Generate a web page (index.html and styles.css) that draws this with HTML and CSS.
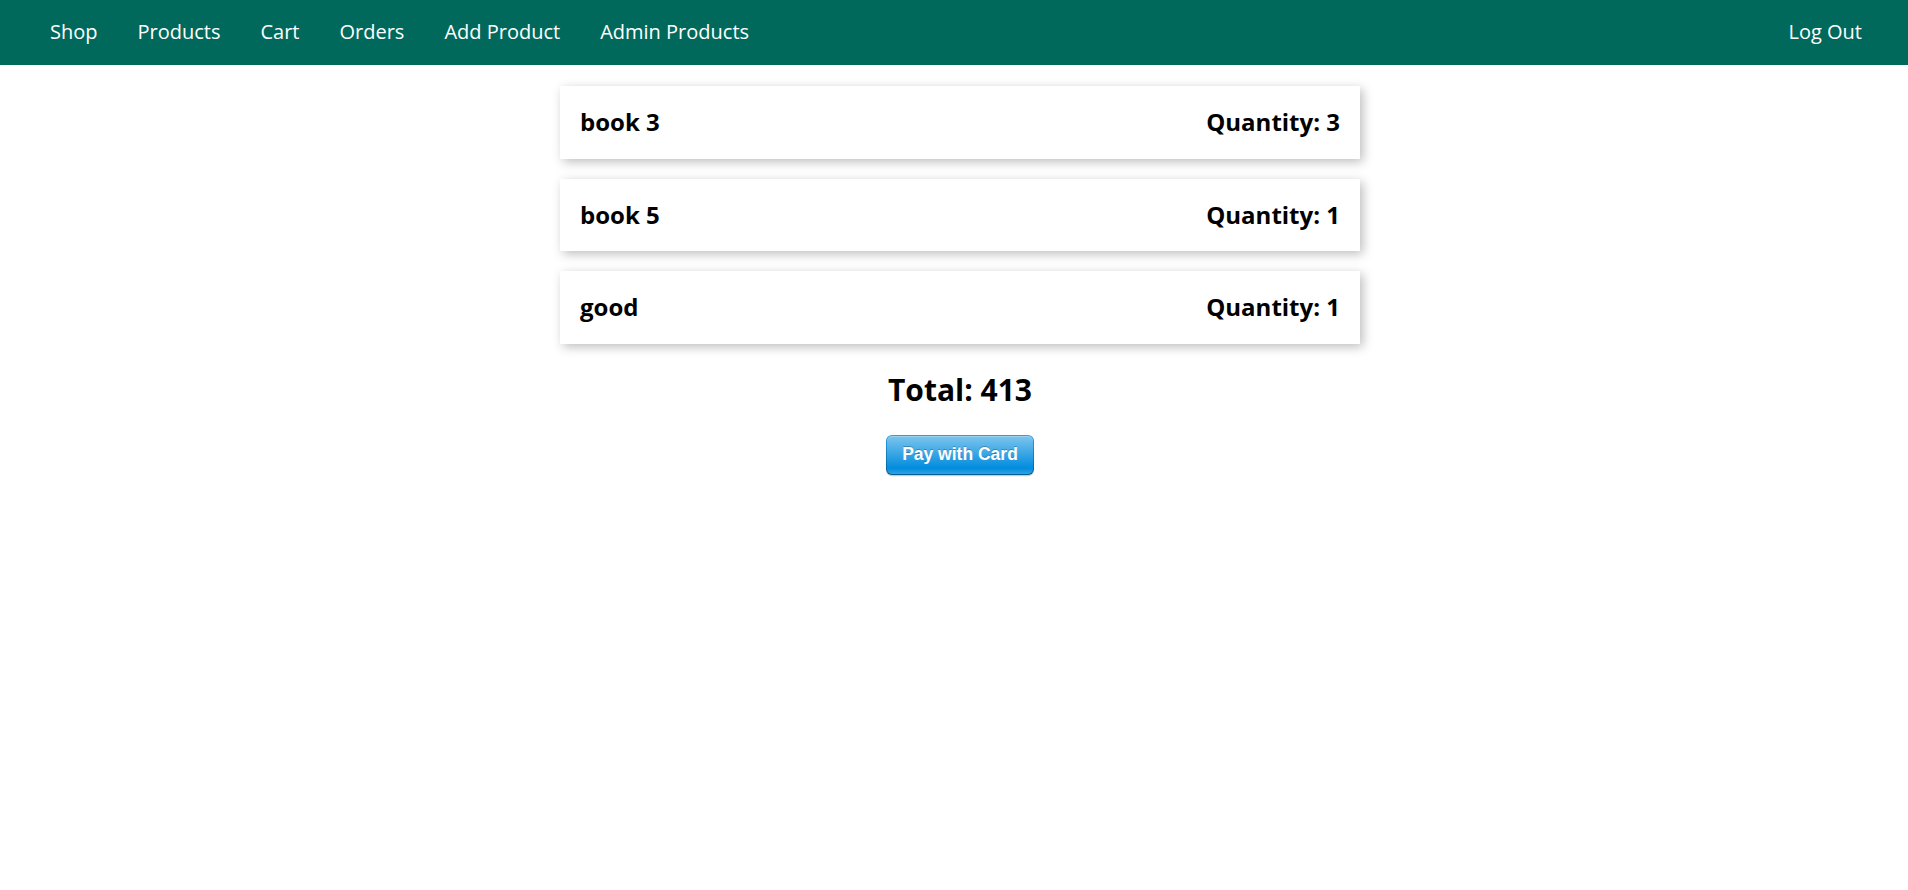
FILE: index.html
```html
<!DOCTYPE html>
<html lang="en">
<head>
<meta charset="utf-8">
<title>Cart</title>
<link rel="stylesheet" href="styles.css">
</head>
<body>
<header class="main-header">
  <nav class="main-header__nav">
    <ul class="main-header__item-list">
      <li class="main-header__item"><a href="#">Shop</a></li>
      <li class="main-header__item"><a href="#">Products</a></li>
      <li class="main-header__item"><a href="#">Cart</a></li>
      <li class="main-header__item"><a href="#">Orders</a></li>
      <li class="main-header__item"><a href="#">Add Product</a></li>
      <li class="main-header__item"><a href="#">Admin Products</a></li>
    </ul>
  </nav>
  <nav class="main-header__nav">
    <ul class="main-header__item-list">
      <li class="main-header__item"><a href="#">Log Out</a></li>
    </ul>
  </nav>
</header>
<main class="main">
  <ul class="cart__item-list">
    <li class="cart__item"><h1>book 3</h1><h2>Quantity: 3</h2></li>
    <li class="cart__item"><h1>book 5</h1><h2>Quantity: 1</h2></li>
    <li class="cart__item"><h1>good</h1><h2>Quantity: 1</h2></li>
  </ul>
  <div class="centered">
    <h2 class="total">Total: 413</h2>
  </div>
  <div class="centered">
    <button class="stripe-button-el" type="button"><span>Pay with Card</span></button>
  </div>
</main>
</body>
</html>
```
FILE: styles.css
```css
html, body {
  margin: 0;
  padding: 0;
}
body {
  font-family: "Open Sans", "Noto Sans", sans-serif;
  color: #000;
  background: #fff;
}
.main-header {
  box-sizing: border-box;
  height: 65px;
  background-color: #00695c;
  padding: 0 26px 3px 30px;
  display: flex;
  align-items: center;
  justify-content: space-between;
}
.main-header__nav {
  height: 100%;
  display: flex;
  align-items: center;
}
.main-header__item-list {
  list-style: none;
  margin: 0;
  padding: 0;
  display: flex;
}
.main-header__item {
  margin: 0 20px;
  padding: 0;
  font-size: 20px;
  line-height: 27px;
}
.main-header__item a {
  text-decoration: none;
  color: #fff;
}
.main {
  padding: 21px 20px 20px 32px;
}
.cart__item-list {
  list-style: none;
  margin: 0 auto;
  padding: 0;
  width: 800px;
}
.cart__item {
  display: flex;
  justify-content: space-between;
  align-items: center;
  padding: 20px;
  box-shadow: 2.5px 2.5px 10px rgba(0, 0, 0, 0.26);
  margin-bottom: 20px;
  background: #fff;
}
.cart__item h1,
.cart__item h2 {
  margin: 0;
  font-size: 24px;
  font-weight: 700;
  line-height: 32.7px;
}
.centered {
  text-align: center;
}
.total {
  font-size: 30px;
  font-weight: 700;
  margin: 25px 0;
  line-height: 41px;
}
.stripe-button-el {
  display: inline-block;
  overflow: hidden;
  background-image: linear-gradient(#28a0e5, #015e94);
  border: 0;
  padding: 1.25px;
  border-radius: 6px;
  box-shadow: 0 1.25px 0 rgba(0, 0, 0, 0.2);
  cursor: pointer;
  margin: 0;
}
.stripe-button-el span {
  display: block;
  padding: 0 15px;
  height: 37.5px;
  line-height: 37.5px;
  background: linear-gradient(#7dc5ee, #008cdd 85%, #30a2e4);
  font-size: 17.5px;
  color: #fff;
  font-weight: 700;
  font-family: "Liberation Sans", Arial, sans-serif;
  text-shadow: 0 -1px 0 rgba(0, 0, 0, 0.25);
  box-shadow: inset 0 1px 0 rgba(255, 255, 255, 0.25);
  border-radius: 5px;
}
```
